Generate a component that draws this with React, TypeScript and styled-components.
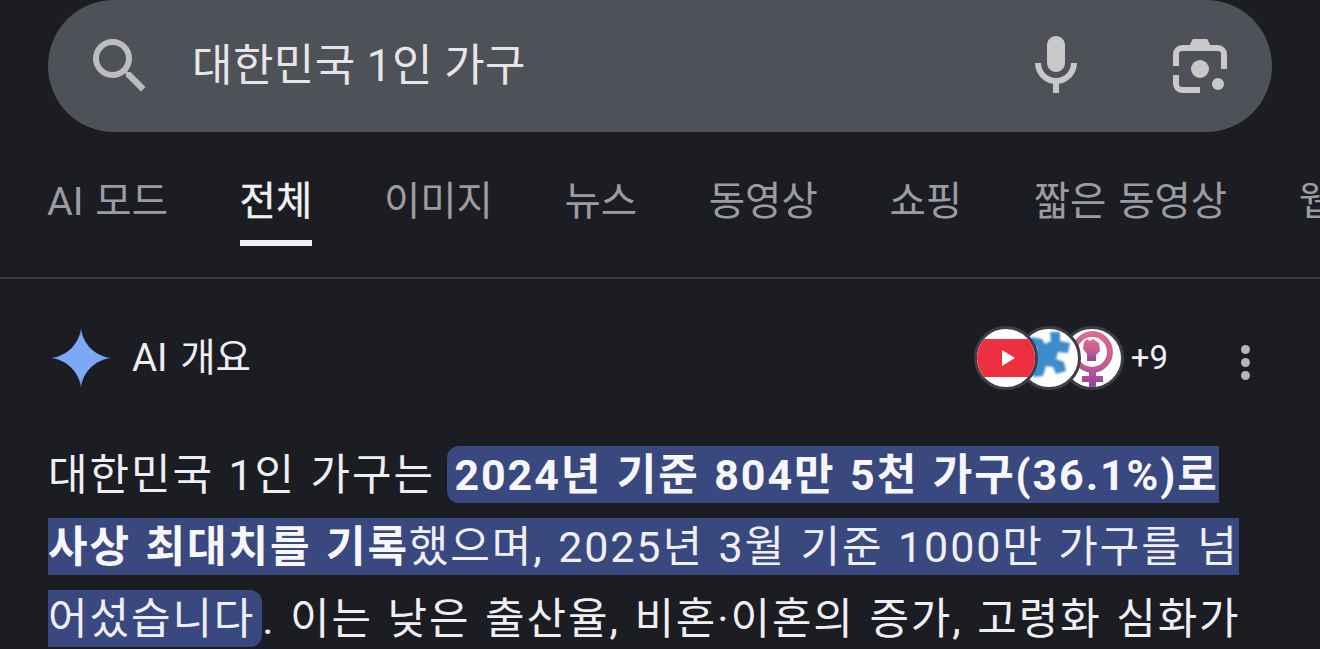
import styled, { createGlobalStyle } from "styled-components";

const fontStack = `Roboto, "Noto Sans CJK KR", sans-serif`;

const GlobalStyle = createGlobalStyle`
  html, body {
    margin: 0;
    padding: 0;
    height: 649px;
    overflow: hidden;
    background-color: #1c1d23;
  }
`;

const Page = styled.div`
  width: 1320px;
  height: 649px;
  overflow: hidden;
  font-family: ${fontStack};
  color: #eeeef3;
`;

const SearchWrap = styled.div`
  padding: 0 48px;
`;

const SearchBar = styled.div`
  height: 132px;
  border-radius: 66px;
  background-color: #4e5157;
  display: flex;
  align-items: center;
  padding: 0 36px;
`;

const SearchIcon = styled.svg`
  width: 72px;
  height: 72px;
  fill: #bdbdbd;
  flex: none;
`;

const Query = styled.div`
  flex: 1;
  margin-left: 36px;
  font-size: 44px;
  letter-spacing: 0.4px;
  color: #e6e6ea;
  position: relative;
  top: -4px;
`;

const ActionIcon = styled.svg<{ $gap?: number }>`
  width: 72px;
  height: 72px;
  fill: #c8c8c8;
  flex: none;
  margin-left: ${(p) => p.$gap ?? 0}px;
`;

const Tabs = styled.nav`
  height: 147px;
  box-sizing: border-box;
  border-bottom: 2px solid #3b3c41;
  padding-left: 47px;
  display: flex;
  gap: 71.6px;
  overflow: hidden;
  white-space: nowrap;
`;

const Tab = styled.div<{ $active?: boolean }>`
  height: 114px;
  box-sizing: border-box;
  display: flex;
  align-items: flex-end;
  flex: none;
  padding-bottom: 14px;
  font-size: 39.5px;
  font-weight: 400;
  word-spacing: 2px;
  color: ${(p) => (p.$active ? "#f0f0f4" : "#9b9ca1")};
  -webkit-text-stroke: ${(p) => (p.$active ? "0.35px #f0f0f4" : "0")};
  border-bottom: 6px solid ${(p) => (p.$active ? "#f0f0f4" : "transparent")};
`;

const Overview = styled.section`
  padding: 46px 48px 0;
`;

const OverviewHead = styled.div`
  display: flex;
  align-items: center;
  height: 65px;
`;

const Spark = styled.svg`
  width: 60px;
  height: 60px;
  margin-left: 3px;
  flex: none;
`;

const OverviewTitle = styled.div`
  margin-left: 21px;
  font-size: 38.5px;
  word-spacing: 3px;
  flex: 1;
  position: relative;
  top: -4px;
`;

const Sources = styled.div`
  display: flex;
  align-items: center;
`;

const Favicon = styled.div<{ $layer: number }>`
  width: 64px;
  height: 64px;
  box-sizing: border-box;
  border: 3px solid #3d3e49;
  border-radius: 50%;
  background-color: #fff;
  overflow: hidden;
  position: relative;
  z-index: ${(p) => p.$layer};
  margin-right: -21px;

  svg {
    display: block;
    width: 100%;
    height: 100%;
  }
`;

const MoreCount = styled.span`
  margin-left: 28px;
  font-size: 33px;
  color: #eeeef3;
`;

const Dots = styled.div`
  margin-left: 73px;
  margin-right: 22px;
  display: flex;
  flex-direction: column;
  gap: 4px;
  margin-top: 10px;
`;

const Dot = styled.span`
  width: 9px;
  height: 9px;
  border-radius: 50%;
  background-color: #b6b6b6;
`;

const Summary = styled.p`
  margin: 49px 0 0;
  font-size: 43px;
  line-height: 72px;
  letter-spacing: 1.9px;
  word-spacing: 2px;
  white-space: nowrap;
  color: #eeeef3;
`;

const Highlight = styled.span`
  background-color: #3a4880;
  padding: 4px 7px 3px;
  margin-left: -2px;
  border-radius: 12px;
  box-decoration-break: slice;
  -webkit-box-decoration-break: slice;
`;

const Strong = styled.strong`
  font-weight: 700;
  color: #f6f6fb;
`;

function App() {
  return (
    <Page>
      <GlobalStyle />
      <SearchWrap>
        <SearchBar>
          <SearchIcon viewBox="0 0 24 24">
            <path d="M15.5 14h-.79l-.28-.27A6.471 6.471 0 0 0 16 9.5 6.5 6.5 0 1 0 9.5 16c1.61 0 3.09-.59 4.23-1.57l.27.28v.79l5 4.99L20.49 19l-4.99-5zm-6 0C7.01 14 5 11.99 5 9.5S7.01 5 9.5 5 14 7.01 14 9.5 11.99 14 9.5 14z" />
          </SearchIcon>
          <Query>대한민국 1인 가구</Query>
          <ActionIcon viewBox="0 0 24 24">
            <path d="M12 14c1.66 0 3-1.34 3-3V5c0-1.66-1.34-3-3-3S9 3.34 9 5v6c0 1.66 1.34 3 3 3z" />
            <path d="M17 11c0 2.76-2.24 5-5 5s-5-2.24-5-5H5c0 3.53 2.61 6.43 6 6.92V21h2v-3.08c3.39-.49 6-3.39 6-6.92h-2z" />
          </ActionIcon>
          <ActionIcon viewBox="0 0 24 24" $gap={72}>
            <path d="M3 12V8a3 3 0 0 1 3-3h2.600l1-2h4.800l1 2H18a3 3 0 0 1 3 3v5h-2V8a1 1 0 0 0-1-1H6a1 1 0 0 0-1 1v4z" />
            <path d="M3 15h2v3a1 1 0 0 0 1 1h6v2H6a3 3 0 0 1-3-3z" />
            <circle cx="12" cy="13" r="3" />
            <circle cx="18" cy="18" r="2" />
          </ActionIcon>
        </SearchBar>
      </SearchWrap>

      <Tabs>
        <Tab>AI 모드</Tab>
        <Tab $active>전체</Tab>
        <Tab>이미지</Tab>
        <Tab>뉴스</Tab>
        <Tab>동영상</Tab>
        <Tab>쇼핑</Tab>
        <Tab>짧은 동영상</Tab>
        <Tab>웹</Tab>
      </Tabs>

      <Overview>
        <OverviewHead>
          <Spark viewBox="0 0 60 60">
            <defs>
              <radialGradient id="spark" cx="50%" cy="50%" r="50%">
                <stop offset="0%" stopColor="#7ba8f9" />
                <stop offset="70%" stopColor="#7ba8f9" />
                <stop offset="100%" stopColor="#5d7fc0" />
              </radialGradient>
            </defs>
            <path
              fill="url(#spark)"
              d="M30 0C31.500 15 43 28 60 30C43 32 31.500 45 30 60C28.500 45 17 32 0 30C17 28 28.500 15 30 0z"
            />
          </Spark>
          <OverviewTitle>AI 개요</OverviewTitle>
          <Sources>
            <Favicon $layer={3}>
              <svg viewBox="0 0 58 58">
                <rect x="-6" y="10" width="66" height="38" rx="8" fill="#ee2f3f" />
                <path d="M25 21l13 8-13 8z" fill="#fff" />
              </svg>
            </Favicon>
            <Favicon $layer={2}>
              <svg viewBox="0 0 58 58">
                <g fill="#3d8ccb" style={{ filter: "blur(1.2px)" }}>
                  <path d="M30 3h10v9l10 2-2 10-10-1-2 7 8 3 2 9-10 3-3-7-7-1-3 10-10 1-1-11-5-2-1-9 9-1 2-6-8-2 2-9 11 2 3 5 6-3z" />
                </g>
              </svg>
            </Favicon>
            <Favicon $layer={1}>
              <svg viewBox="0 0 58 58">
                <defs>
                  <linearGradient id="fem" x1="0" y1="0" x2="0" y2="1">
                    <stop offset="0%" stopColor="#dc6d8e" />
                    <stop offset="60%" stopColor="#c45a93" />
                    <stop offset="100%" stopColor="#8a45a3" />
                  </linearGradient>
                </defs>
                <g fill="url(#fem)">
                  <path d="M29 2a21 21 0 0 1 4 41.600V47h7v6h-7v5h-7v-5h-7v-6h7v-3.400A21 21 0 0 1 29 2zm0 6a15 15 0 1 0 0 30 15 15 0 0 0 0-30z" />
                  <path d="M21 13l3-3 3 2 3-2 3 2 3 2 1 8-4 4v6h-9v-7l-4-5z" />
                </g>
              </svg>
            </Favicon>
          </Sources>
          <MoreCount>+9</MoreCount>
          <Dots>
            <Dot />
            <Dot />
            <Dot />
          </Dots>
        </OverviewHead>

        <Summary>
          대한민국 1인 가구는{" "}
          <Highlight>
            <Strong>2024년 기준 804만 5천 가구(36.1%)로</Strong>
            <br />
            <Strong>사상 최대치를 기록</Strong>했으며, 2025년 3월 기준 1000만 가구를 넘
            <br />
            어섰습니다
          </Highlight>
          . 이는 낮은 출산율, 비혼·이혼의 증가, 고령화 심화가
        </Summary>
      </Overview>
    </Page>
  );
}

export default App;
